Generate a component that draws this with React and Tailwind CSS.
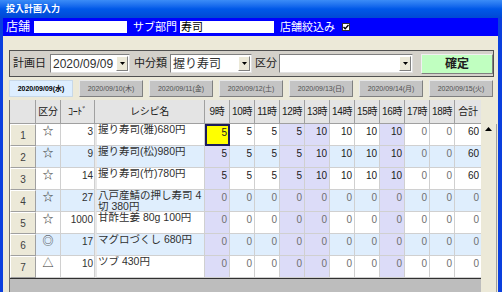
import React from 'react';

// 時間帯の列と行データ
const hours = ['9時', '10時', '11時', '12時', '13時', '14時', '15時', '16時', '17時', '18時'];
const lavCols = [0, 3, 4, 7];
const tabs = [
  '2020/09/09(水)', '2020/09/10(木)', '2020/09/11(金)', '2020/09/12(土)',
  '2020/09/13(日)', '2020/09/14(月)', '2020/09/15(火)',
];
const rows = [
  { k: '☆', code: 3, name: ['握り寿司(雅)680円'], v: [5, 5, 5, 5, 10, 10, 10, 10, 0, 0], total: 60 },
  { k: '☆', code: 9, name: ['握り寿司(松)980円'], v: [5, 5, 5, 5, 10, 10, 10, 10, 0, 0], total: 60 },
  { k: '☆', code: 14, name: ['握り寿司(竹)780円'], v: [5, 5, 5, 5, 10, 10, 10, 10, 0, 0], total: 60 },
  { k: '☆', code: 27, name: ['八戸産鯖の押し寿司 4', '切 380円'], v: [0, 0, 0, 0, 0, 0, 0, 0, 0, 0], total: 0 },
  { k: '☆', code: 1000, name: ['甘酢生姜 80g 100円'], v: [0, 0, 0, 0, 0, 0, 0, 0, 0, 0], total: 0 },
  { k: '◎', code: 17, name: ['マグロづくし 680円'], v: [0, 0, 0, 0, 0, 0, 0, 0, 0, 0], total: 0 },
  { k: '△', code: 10, name: ['ツブ 430円'], v: [0, 0, 0, 0, 0, 0, 0, 0, 0, 0], total: 0 },
];

const cols = 'grid grid-cols-[26px_25px_34px_110px_repeat(10,25px)_27px]';

function DropBtn() {
  return (
    <div className="w-[12px] h-[15px] shrink-0 bg-[#ECE9D8] border border-t-white border-l-white border-r-[#808080] border-b-[#808080] flex items-center justify-center">
      <svg width="5" height="3" viewBox="0 0 5 3"><path d="M0 0h5L2.5 3z" fill="#000" /></svg>
    </div>
  );
}

function Select({ w, text }) {
  return (
    <div className={`${w} h-[19px] shrink-0 bg-white border border-t-[#808080] border-l-[#808080] border-r-[#E0E0E0] border-b-[#E0E0E0] flex items-center justify-between pl-[2px] pr-[1px]`}>
      <span className="text-[12px] leading-[14px] text-[#303030] whitespace-nowrap">{text}</span>
      <DropBtn />
    </div>
  );
}

export default function App() {
  return (
    <div className="w-[502px] h-[292px] overflow-hidden bg-[#0A3FDE] flex flex-col font-['Liberation_Sans','Noto_Sans_CJK_JP',sans-serif]">
      {/* タイトルバー */}
      <div className="h-[18px] shrink-0 bg-gradient-to-b from-[#3B8CF7] via-[#0058E8] to-[#0048D4] pl-[6px] flex items-center text-white text-[9px] leading-[10px] font-bold">
        投入計画入力
      </div>

      <div className="flex-1 ml-[3px] mr-[4px] flex flex-col bg-[#ECE9D8] min-h-0">
        {/* 店舗バー */}
        <div className="h-[18px] shrink-0 bg-[#0000FF] flex items-center pl-[3px] text-white whitespace-nowrap">
          <span className="shrink-0 text-[12px] leading-[14px]">店舗</span>
          <div className="shrink-0 ml-[4px] w-[93px] h-[12px] bg-white" />
          <span className="shrink-0 ml-[6px] text-[11px] leading-[13px]">サブ部門</span>
          <div className="shrink-0 ml-[3px] w-[94px] h-[12px] bg-white text-black text-[11px] leading-[12px] pl-[1px]">寿司</div>
          <span className="shrink-0 ml-[6px] text-[11px] leading-[13px]">店舗絞込み</span>
          <div className="shrink-0 ml-[7px] w-[8px] h-[8px] bg-white border border-[#303030] flex items-center justify-center">
            <svg width="6" height="6" viewBox="0 0 6 6"><path d="M0.5 3l1.7 1.8L5.5 1" stroke="#000" strokeWidth="1.4" fill="none" /></svg>
          </div>
        </div>

        <div className="flex-1 flex flex-col pl-[6px] min-h-0">
          {/* 条件パネル */}
          <div className="mt-[14px] w-[485px] h-[27px] shrink-0 bg-[#D4D1CA] border border-[#505050] flex items-center pl-[3px] text-[#202020] whitespace-nowrap">
            <span className="shrink-0 text-[11px] leading-[13px]">計画日</span>
            <div className="shrink-0 ml-[4px]"><Select w="w-[80px]" text="2020/09/09" /></div>
            <span className="shrink-0 ml-[4px] text-[11px] leading-[13px]">中分類</span>
            <div className="shrink-0 ml-[3px]"><Select w="w-[82px]" text="握り寿司" /></div>
            <span className="shrink-0 ml-[3px] text-[11px] leading-[13px]">区分</span>
            <div className="shrink-0 ml-[2px]"><Select w="w-[134px]" text="" /></div>
            <button className="shrink-0 ml-[8px] w-[72px] h-[20px] bg-[#C0FFC0] border border-t-[#F0F0F0] border-l-[#F0F0F0] border-r-[#808080] border-b-[#808080] text-[12px] leading-[14px] font-bold text-[#202020]">
              確定
            </button>
          </div>

          {/* 日付タブ */}
          <div className="mt-[3px] h-[17px] shrink-0 flex gap-[6px]">
            {tabs.map((t, i) => (
              <div
                key={t}
                className={
                  i === 0
                    ? 'w-[64px] h-[17px] shrink-0 bg-[#DDEEFF] border border-[#C8D8E8] flex items-center justify-center text-[7px] leading-[8px] font-bold text-black whitespace-nowrap'
                    : 'w-[64px] h-[17px] shrink-0 bg-[#C4C4C4] border border-t-[#E8E8E8] border-l-[#E8E8E8] border-r-[#808080] border-b-[#808080] flex items-center justify-center text-[7px] leading-[8px] text-[#505050] whitespace-nowrap'
                }
              >
                {t}
              </div>
            ))}
          </div>

          {/* 明細グリッド */}
          <div className="mt-[3px] w-[488px] flex-1 flex min-h-0">
            <div className="w-[472px] flex flex-col bg-[#BDBDBD] border-l border-[#707070]">
              <div className={`${cols} h-[24px] shrink-0 bg-[#E4E4E4] text-[10px] leading-[12px] text-[#202020]`}>
                {['', '区分', 'ｺｰﾄﾞ', 'レシピ名', ...hours, '合計'].map((h, i) => (
                  <div key={i} className="border-r border-b border-[#A0A0A0] flex items-center justify-center whitespace-nowrap tracking-[-0.3px]">
                    {h}
                  </div>
                ))}
              </div>
              {rows.map((r, ri) => {
                const rowBg = ri % 2 === 1 ? 'bg-[#DFEEFD]' : 'bg-white';
                return (
                  <div key={ri} className={`${cols} h-[22px] shrink-0 text-[#202020]`}>
                    <div className="bg-[#ECE9D8] border border-t-white border-l-white border-r-[#A0A0A0] border-b-[#A0A0A0] flex items-center justify-center pt-[2px] text-[10px] leading-[12px] text-[#404040]">
                      {ri + 1}
                    </div>
                    <div className={`${rowBg} border-r border-b border-[#D0D0D0] flex justify-center pt-[1px] text-[11px] leading-[12px] text-[#303030]`}>
                      {r.k}
                    </div>
                    <div className={`${rowBg} border-r border-b border-[#D0D0D0] text-right pr-[1px] pt-[2px] text-[10px] leading-[12px] text-[#303030]`}>
                      {r.code}
                    </div>
                    <div className={`${rowBg} border-r border-l-2 border-b border-[#D0D0D0] border-l-[#E8E8E8] pl-[1px] text-[10.5px] leading-[10.5px] text-[#303030] overflow-hidden`}>
                      {r.name.map((n) => (
                        <div key={n} className="whitespace-nowrap">{n}</div>
                      ))}
                    </div>
                    {r.v.map((v, ci) => {
                      const focus = ri === 0 && ci === 0;
                      const bg = focus ? 'bg-[#FFFF00] border-2 border-[#1C1C5C]' : `${lavCols.includes(ci) ? 'bg-[#DCDCF8]' : rowBg} border-r border-b border-[#D0D0D0]`;
                      return (
                        <div
                          key={ci}
                          className={`${bg} text-right ${focus ? 'pr-[1px] pt-[1px]' : 'pr-[2px] pt-[2px]'} text-[10px] leading-[12px] ${v === 0 ? 'text-[#707070]' : 'text-[#202020]'}`}
                        >
                          {v}
                        </div>
                      );
                    })}
                    <div className={`${rowBg} border-r border-b border-[#D0D0D0] text-right pr-[2px] pt-[2px] text-[10px] leading-[12px] ${r.total === 0 ? 'text-[#707070]' : 'text-[#202020]'}`}>
                      {r.total}
                    </div>
                  </div>
                );
              })}
              <div className="flex-1 border-t border-[#303030]" />
            </div>

            {/* 縦スクロールバー */}
            <div className="w-[16px] flex flex-col bg-[#ECE9D8]">
              <div className="h-[24px] shrink-0" />
              <div className="flex-1 border-r border-[#A0A0A0] flex flex-col items-center pt-[3px]">
                <svg width="7" height="4" viewBox="0 0 7 4"><path d="M0 4h7L3.5 0z" fill="#000" /></svg>
              </div>
            </div>
          </div>
        </div>
      </div>
    </div>
  );
}
